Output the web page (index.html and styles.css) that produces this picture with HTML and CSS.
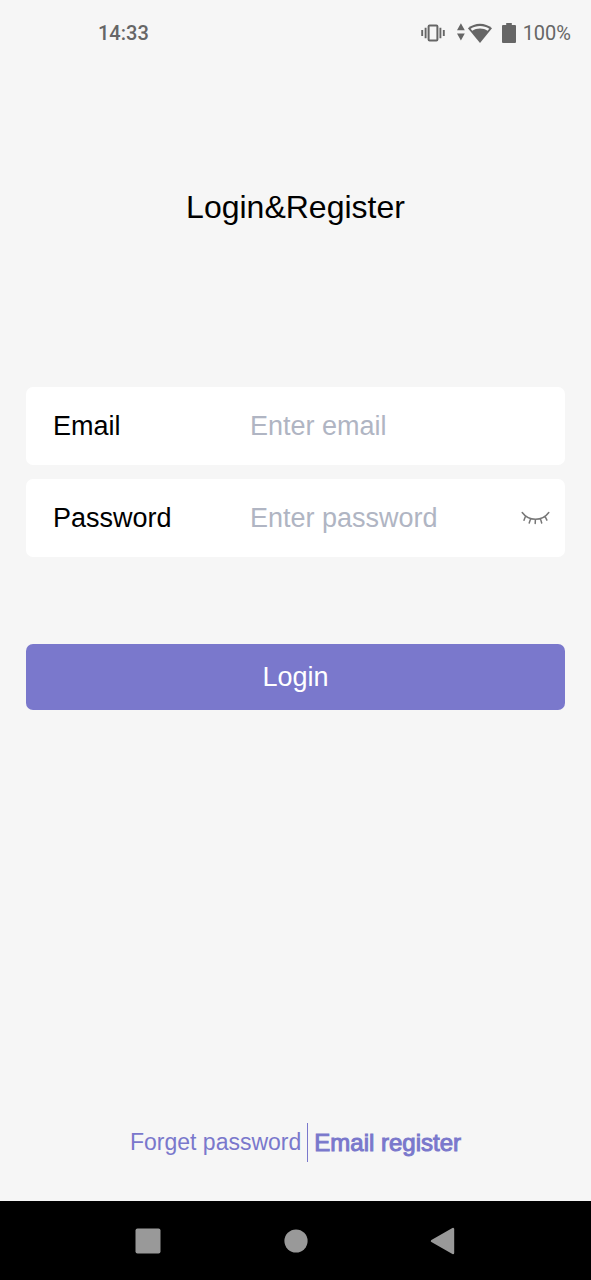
FILE: index.html
```html
<!DOCTYPE html>
<html lang="en">
<head>
<meta charset="utf-8">
<meta name="viewport" content="width=device-width, initial-scale=1">
<title>Login&amp;Register</title>
<link rel="stylesheet" href="styles.css">
</head>
<body>
<div class="screen">
  <header class="status">
    <time class="clock">14:33</time>
    <div class="indicators">
      <svg class="vibrate" width="24" height="18" viewBox="0 0 24 18" aria-hidden="true">
        <rect x="7.6" y="1.6" width="8.8" height="14.8" rx="1" fill="none" stroke="#666" stroke-width="2"/>
        <path d="M1.200 6v6M4.600 3.800v10.400M19.400 3.800v10.400M22.800 6v6" stroke="#666" stroke-width="1.900"/>
      </svg>
      <svg class="wifi" width="36" height="22" viewBox="0 0 36 22" aria-hidden="true">
        <path d="M4.900 1.200l3.900 7H1zM4.900 18.600l3.900-7H1z" fill="#666"/>
        <path d="M24 21L11.900 6.200C15.400 3.300 19.600 1.700 24 1.700S32.600 3.300 36 6.200z" fill="#666"/>
        <path d="M14.600 6.700C17.400 4.800 20.600 3.900 24 3.900S30.600 4.800 33.300 6.700L31.600 8.800C29.400 7.300 26.800 6.500 24 6.500S18.500 7.300 16.300 8.800z" fill="#f6f6f6"/>
      </svg>
      <svg class="battery" width="14" height="20" viewBox="0 0 14 20" aria-hidden="true">
        <path d="M4.200 0h5.600v2H13a1 1 0 0 1 1 1v16a1 1 0 0 1-1 1H1a1 1 0 0 1-1-1V3a1 1 0 0 1 1-1h3.200z" fill="#666"/>
      </svg>
      <span class="level">100%</span>
    </div>
  </header>

  <main class="content">
    <h1 class="title">Login&amp;Register</h1>
    <form class="form">
      <div class="field">
        <label class="label" for="email">Email</label>
        <input class="input" id="email" type="email" placeholder="Enter email">
      </div>
      <div class="field">
        <label class="label" for="password">Password</label>
        <input class="input" id="password" type="password" placeholder="Enter password">
        <button class="reveal" type="button" aria-label="Show password">
          <svg width="29" height="14" viewBox="0 0 29 14" fill="none" stroke="#777" stroke-width="1.500" stroke-linecap="round" aria-hidden="true">
            <path d="M1.200 1.500C4.500 6 9 8.300 14.500 8.300S24.500 6 27.800 1.500M4.500 5.200L3 9.200M9.700 7.600L8.200 12M14.400 8.300L14.200 12.500M19.400 7.600L20.700 12M24 5.300L25.900 9.200"/>
          </svg>
        </button>
      </div>
      <button class="login" type="submit">Login</button>
    </form>
    <nav class="links" aria-label="Account">
      <a class="link" href="#forget">Forget password</a>
      <a class="link register" href="#register">Email register</a>
    </nav>
  </main>

  <nav class="system" aria-label="System">
    <button class="key" type="button" aria-label="Recent apps">
      <svg width="26" height="26" viewBox="0 0 26 26"><rect x=".5" y=".5" width="25" height="25" rx="2" fill="#999"/></svg>
    </button>
    <button class="key" type="button" aria-label="Home">
      <svg width="26" height="26" viewBox="0 0 26 26"><circle cx="13" cy="13" r="11.600" fill="#999"/></svg>
    </button>
    <button class="key" type="button" aria-label="Back">
      <svg width="26" height="28" viewBox="0 0 26 28"><path d="M2 14L23 2v24z" fill="#999" stroke="#999" stroke-width="2.400" stroke-linejoin="round"/></svg>
    </button>
  </nav>
</div>
</body>
</html>
```
FILE: styles.css
```css
* {
  box-sizing: border-box;
}

body {
  margin: 0;
  background: #f6f6f6;
  color: #000;
  font-family: "Liberation Sans", Arial, sans-serif;
}

button {
  border: 0;
  padding: 0;
  background: none;
  font: inherit;
  cursor: pointer;
}

svg {
  display: block;
}

.screen {
  display: flex;
  flex-direction: column;
  min-height: 100vh;
}

.status {
  display: flex;
  align-items: center;
  justify-content: space-between;
  height: 65px;
  padding: 0 20px 0 98px;
  color: #666;
  font: 500 20px/24px Roboto, sans-serif;
}

.indicators {
  display: flex;
  align-items: center;
}

.vibrate {
  margin-right: 11px;
}

.wifi {
  margin-right: 10px;
}

.battery {
  margin-right: 7px;
}

.level {
  font-weight: 400;
}

.content {
  flex: 1;
  display: flex;
  flex-direction: column;
  padding: 123px 26px 39px;
}

.title {
  margin: 0 0 161px;
  font-size: 32px;
  font-weight: 400;
  line-height: 38px;
  text-align: center;
}

.form {
  display: flex;
  flex-direction: column;
  gap: 14px;
}

.field {
  display: flex;
  align-items: center;
  height: 78px;
  padding: 0 15px 0 27px;
  border-radius: 7px;
  background: #fff;
  font-size: 27px;
}

.label {
  flex: none;
  width: 197px;
}

.input {
  flex: 1;
  min-width: 0;
  height: 100%;
  padding: 0;
  border: 0;
  outline: 0;
  background: none;
  color: #000;
  font: inherit;
}

.input::placeholder {
  color: #b0b5c3;
  opacity: 1;
}

.login {
  height: 66px;
  margin-top: 73px;
  border-radius: 7px;
  background: #7a78cc;
  color: #fff;
  font-size: 27px;
}

.links {
  display: flex;
  justify-content: center;
  margin-top: auto;
  font-size: 23px;
  line-height: 39px;
}

.link {
  padding: 0 6px;
  color: #7a78cc;
  text-decoration: none;
}

.register {
  border-left: 1px solid #7a78cc;
  font-size: 24px;
  -webkit-text-stroke: 1px #7a78cc;
}

.system {
  display: flex;
  height: 79px;
  padding: 0 12.5%;
  background: #000;
}

.key {
  flex: 1;
  display: flex;
  align-items: center;
  justify-content: center;
}
```
